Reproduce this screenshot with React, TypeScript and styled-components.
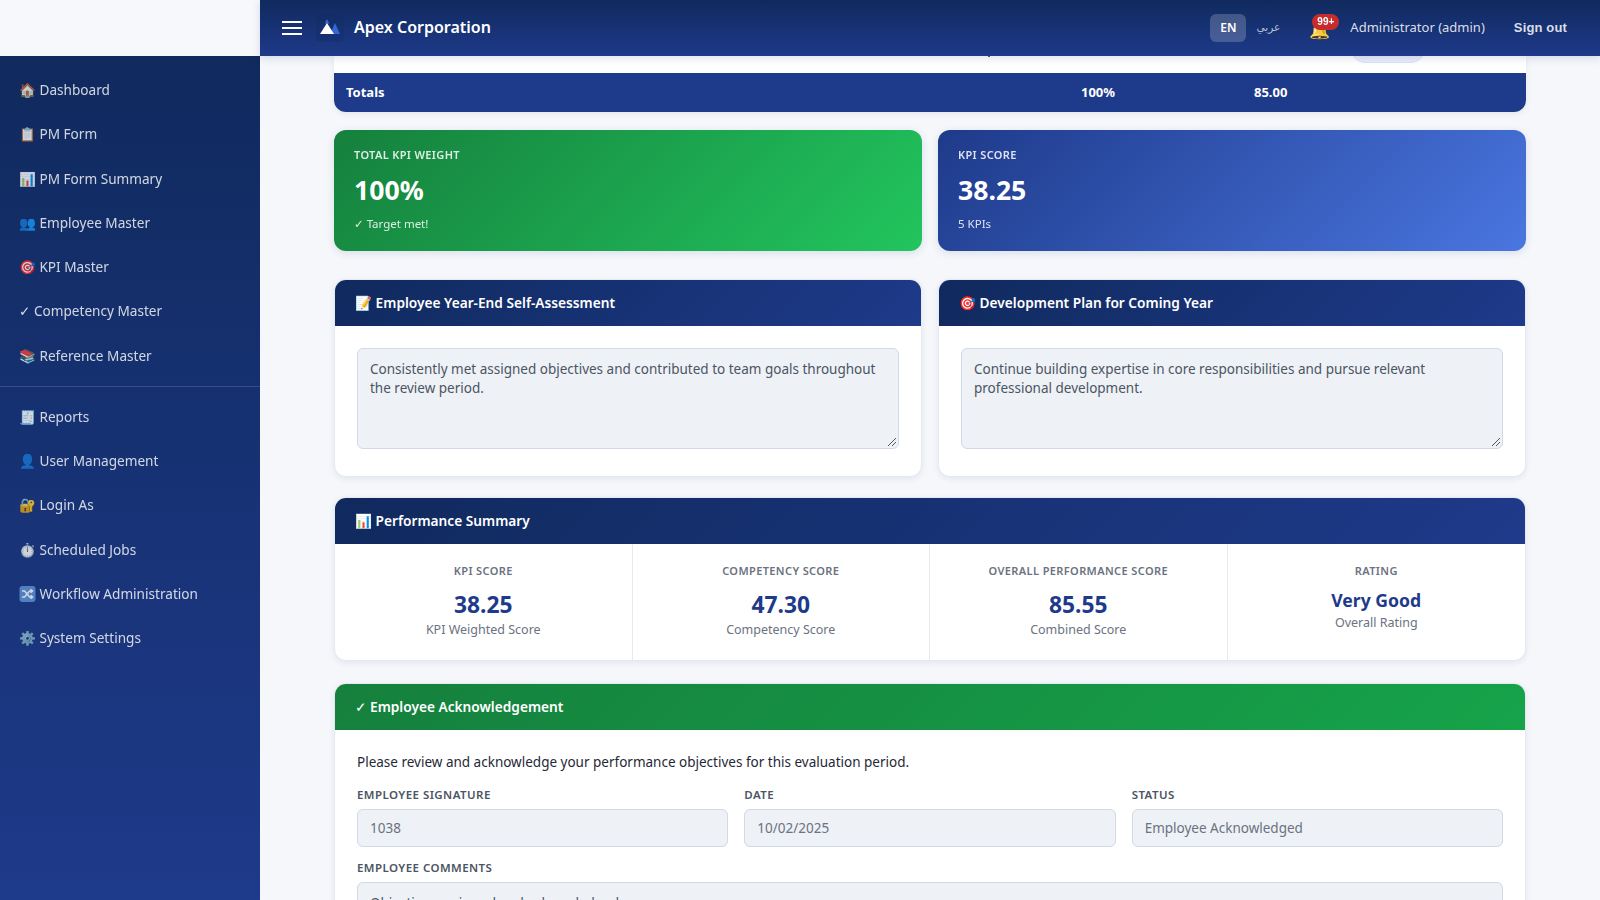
import type { ReactNode } from 'react';
import styled, { createGlobalStyle } from 'styled-components';

const GlobalStyle = createGlobalStyle`
  * { box-sizing: border-box; }
  html, body { margin: 0; height: 100%; overflow: hidden; }
  body {
    font-family: "Noto Sans", "DejaVu Sans", "Noto Color Emoji", sans-serif;
    background: #f5f7fb;
    color: #1f2937;
  }
`;

const Shell = styled.div`
  display: grid;
  grid-template-columns: 260px 1fr;
  grid-template-rows: 56px 1fr;
  height: 100vh;
  overflow: hidden;
`;

const BrandGap = styled.div`
  background: #f7f8fc;
`;

const TopBar = styled.header`
  display: flex;
  align-items: center;
  padding: 0 33px 0 22px;
  background: linear-gradient(180deg, #102a5e 0%, #1e3a8a 100%);
  box-shadow: 0 2px 8px rgba(15, 42, 92, 0.15);
  color: #fff;
  position: relative;
  z-index: 2;
`;

const Burger = styled.button`
  display: flex;
  flex-direction: column;
  justify-content: space-between;
  width: 20px;
  height: 14px;
  padding: 0;
  border: 0;
  background: none;
  span {
    display: block;
    height: 2px;
    background: #fff;
  }
`;

const LogoTile = styled.div`
  display: flex;
  width: 28px;
  height: 28px;
  margin-left: 14px;
  border-radius: 6px;
  background: rgba(15, 42, 92, 0.28);
`;

const Company = styled.div`
  margin-left: 10px;
  padding-bottom: 2px;
  font-size: 16px;
  font-weight: 600;
`;

const TopRight = styled.div`
  display: flex;
  align-items: center;
  margin-left: auto;
`;

const LangButton = styled.div<{ $active?: boolean }>`
  display: flex;
  align-items: center;
  justify-content: center;
  width: 36px;
  height: 28px;
  padding-bottom: 2px;
  border-radius: 6px;
  font-size: ${(p) => (p.$active ? '12px' : '10.5px')};
  font-weight: ${(p) => (p.$active ? 600 : 400)};
  margin-left: ${(p) => (p.$active ? '0' : '4px')};
  background: ${(p) => (p.$active ? 'rgba(255,255,255,0.2)' : 'transparent')};
  color: ${(p) => (p.$active ? '#fff' : 'rgba(255,255,255,0.7)')};
`;

const BellWrap = styled.div`
  position: relative;
  width: 28px;
  height: 28px;
  margin-left: 23px;
  font-size: 17px;
  line-height: 32px;
  filter: saturate(0.85);
`;

const Badge = styled.span`
  position: absolute;
  top: 0;
  left: 3px;
  height: 16px;
  padding: 0 5px;
  border-radius: 8px;
  background: #dc2626;
  color: #fff;
  font: 700 10px/16px "Liberation Sans", sans-serif;
`;

const UserName = styled.div`
  margin-left: 13px;
  padding-bottom: 2px;
  font-size: 13px;
  color: rgba(255, 255, 255, 0.85);
`;

const SignOut = styled.div`
  margin-left: 29px;
  padding-bottom: 1px;
  font: 700 13px "Liberation Sans", sans-serif;
  letter-spacing: 0.15px;
  color: rgba(255, 255, 255, 0.85);
`;

const Sidebar = styled.nav`
  background: linear-gradient(180deg, #102a5e 0%, #1e3a8a 100%);
  padding-top: 12px;
`;

const NavItem = styled.div`
  padding: 12px 19px;
  font-size: 13.6px;
  line-height: 20.25px;
  color: #fff;
  opacity: 0.8;
  white-space: nowrap;
`;

const NavDivider = styled.div`
  height: 1px;
  margin: 8px 0;
  background: rgba(255, 255, 255, 0.15);
`;

const NavGlyph = styled.svg`
  vertical-align: -3px;
`;

const Main = styled.main`
  overflow: hidden;
  padding: 0 74px;
`;

const TableCard = styled.section`
  background: #fff;
  border-radius: 0 0 12px 12px;
  box-shadow: 0 2px 6px rgba(15, 42, 92, 0.08);
`;

const ClippedRow = styled.div`
  position: relative;
  display: flex;
  justify-content: flex-end;
  align-items: flex-end;
  height: 17px;
  padding-right: 101px;
  overflow: hidden;
`;

const CutDescender = styled.span`
  position: absolute;
  left: 654px;
  top: 0;
  width: 2px;
  height: 1px;
  background: #555b66;
`;

const Pill = styled.span`
  display: block;
  width: 74px;
  height: 28px;
  margin-bottom: 10px;
  border-radius: 14px;
  background: #e9eefb;
  border: 1px solid #dbe4f8;
`;

const TotalsRow = styled.div`
  display: grid;
  grid-template-columns: 735px 173px 1fr;
  align-items: center;
  height: 39px;
  padding: 0 0 2px 12px;
  background: #1e3a8a;
  border-radius: 0 0 12px 12px;
  color: #fff;
  font-size: 13px;
  font-weight: 700;
`;

const StatGrid = styled.div`
  display: grid;
  grid-template-columns: 1fr 1fr;
  gap: 16px;
  margin-top: 18px;
`;

const StatCard = styled.div<{ $tone: 'green' | 'blue' }>`
  height: 121px;
  padding: 17px 20px;
  border-radius: 12px;
  color: #fff;
  background: ${(p) =>
    p.$tone === 'green'
      ? 'linear-gradient(135deg, #15803d, #22c55e)'
      : 'linear-gradient(135deg, #1e3a8a, #4a76e0)'};
  box-shadow: 0 2px 8px rgba(15, 42, 92, 0.12);
`;

const StatLabel = styled.div`
  font-size: 11px;
  font-weight: 600;
  line-height: 15px;
  letter-spacing: 0.36px;
  opacity: 0.85;
`;

const StatValue = styled.div`
  margin-top: 9px;
  font-size: 26.6px;
  font-weight: 700;
  line-height: 38px;
`;

const StatNote = styled.div`
  margin-top: 7px;
  font-size: 11.5px;
  line-height: 16px;
  opacity: 0.85;
`;

const PanelGrid = styled.div`
  display: grid;
  grid-template-columns: 1fr 1fr;
  gap: 16px;
  margin-top: 28px;
`;

const Panel = styled.section<{ $gap?: number }>`
  margin-top: ${(p) => p.$gap ?? 0}px;
  background: #fff;
  border: 1px solid #e5e9f2;
  border-radius: 12px;
  overflow: hidden;
  box-shadow: 0 2px 6px rgba(15, 42, 92, 0.08);
`;

const PanelHead = styled.div<{ $green?: boolean }>`
  display: flex;
  align-items: center;
  height: 46px;
  padding: 0 20px 2px;
  color: #fff;
  font-size: 13.7px;
  font-weight: 600;
  white-space: pre;
  background: ${(p) =>
    p.$green
      ? 'linear-gradient(135deg, #15803d, #16a34a)'
      : 'linear-gradient(135deg, #102a5e, #1e3a8a)'};
`;

const PanelBody = styled.div`
  padding: 22px 22px 27px;
`;

const ReadOnlyArea = styled.div`
  height: 101px;
  padding: 10.5px 12px;
  position: relative;
  background: #eef1f6;
  border: 1px solid #d1d8e6;
  border-radius: 6px;
  color: #4b5563;
  font-size: 13.5px;
  line-height: 19.8px;
`;

const Grip = styled.svg`
  position: absolute;
  right: 1px;
  bottom: 1px;
`;

const ScoreRow = styled.div`
  display: grid;
  grid-template-columns: repeat(4, 1fr);
`;

const ScoreCell = styled.div`
  height: 116px;
  padding-top: 19px;
  text-align: center;
  border-right: 1px solid #e5e9f2;
  &:last-child { border-right: 0; }
`;

const ScoreLabel = styled.div`
  font-size: 11px;
  font-weight: 600;
  line-height: 15px;
  letter-spacing: 0.39px;
  color: #6b7280;
`;

const ScoreValue = styled.div<{ $small?: boolean }>`
  margin-top: ${(p) => (p.$small ? '11px' : '12px')};
  color: #1e3a8a;
  font-weight: 700;
  font-size: ${(p) => (p.$small ? '17.6px' : '22.8px')};
  line-height: ${(p) => (p.$small ? '23px' : '29px')};
`;

const ScoreNote = styled.div`
  margin-top: 2px;
  font-size: 12.5px;
  line-height: 17px;
  color: #6b7280;
`;

const Intro = styled.p`
  margin: 0 0 15px;
  font-size: 13.5px;
  line-height: 20px;
  color: #1f2937;
`;

const FieldRow = styled.div`
  display: grid;
  grid-template-columns: repeat(3, 1fr);
  gap: 16px;
`;

const FieldLabel = styled.div`
  margin-bottom: 7px;
  font-size: 11.5px;
  font-weight: 600;
  line-height: 15px;
  letter-spacing: 0.44px;
  color: #4b5563;
`;

const Input = styled.div`
  display: flex;
  align-items: center;
  height: 38px;
  padding: 0 12px;
  background: #eef1f6;
  border: 1px solid #d1d8e6;
  border-radius: 6px;
  color: #6b7280;
  font-size: 13.5px;
`;

const CommentBlock = styled.div`
  margin-top: 13px;
`;

function ShuffleGlyph() {
  return (
    <NavGlyph width="17" height="16" viewBox="0 0 17 16">
      <rect x="0.5" y="0" width="16" height="16" rx="3" fill="#5f93cf" />
      <path
        d="M3 5h2.6l5 6H13M3 11h2.6l5-6H13M11.6 3.2 13.6 5l-2 1.8M11.6 9.2l2 1.8-2 1.8"
        stroke="#fff"
        strokeWidth="1.5"
        fill="none"
      />
    </NavGlyph>
  );
}

const navTop: ReactNode[] = [
  '🏠 Dashboard',
  '📋 PM Form',
  '📊 PM Form Summary',
  '👥 Employee Master',
  '🎯 KPI Master',
  '✓ Competency Master',
  '📚 Reference Master',
];

const navBottom: ReactNode[] = [
  '🧾 Reports',
  '👤 User Management',
  '🔐 Login As',
  '⏱️ Scheduled Jobs',
  <>
    <ShuffleGlyph /> Workflow Administration
  </>,
  '⚙️ System Settings',
];

const scores = [
  { label: 'KPI SCORE', value: '38.25', note: 'KPI Weighted Score' },
  { label: 'COMPETENCY SCORE', value: '47.30', note: 'Competency Score' },
  { label: 'OVERALL PERFORMANCE SCORE', value: '85.55', note: 'Combined Score' },
  { label: 'RATING', value: 'Very Good', note: 'Overall Rating', small: true },
];

const fields = [
  { label: 'EMPLOYEE SIGNATURE', value: '1038' },
  { label: 'DATE', value: '10/02/2025' },
  { label: 'STATUS', value: 'Employee Acknowledged' },
];

function ReviewArea({ text }: { text: string }) {
  return (
    <ReadOnlyArea>
      {text}
      <Grip width="11" height="11" viewBox="0 0 11 11">
        <path d="M10 2 2 10M10 6 6 10" stroke="#555" strokeWidth="1" fill="none" />
      </Grip>
    </ReadOnlyArea>
  );
}

export default function App() {
  return (
    <>
      <GlobalStyle />
      <Shell>
        <BrandGap />
        <TopBar>
          <Burger>
            <span />
            <span />
            <span />
          </Burger>
          <LogoTile>
            <svg width="28" height="28" viewBox="0 0 28 28">
              <path d="M11 5 13.4 9.5H8.6Z" fill="#3565d6" />
              <path d="M19 9 24 20H14Z" fill="#3565d6" />
              <path d="M11 9 18 20H4Z" fill="#fff" />
            </svg>
          </LogoTile>
          <Company>Apex Corporation</Company>
          <TopRight>
            <LangButton $active>EN</LangButton>
            <LangButton>عربي</LangButton>
            <BellWrap>
              🔔
              <Badge>99+</Badge>
            </BellWrap>
            <UserName>Administrator (admin)</UserName>
            <SignOut>Sign out</SignOut>
          </TopRight>
        </TopBar>
        <Sidebar>
          {navTop.map((item, i) => (
            <NavItem key={i}>{item}</NavItem>
          ))}
          <NavDivider />
          {navBottom.map((item, i) => (
            <NavItem key={i}>{item}</NavItem>
          ))}
        </Sidebar>
        <Main>
          <TableCard>
            <ClippedRow>
              <CutDescender />
              <Pill />
            </ClippedRow>
            <TotalsRow>
              <span>Totals</span>
              <span>100%</span>
              <span>85.00</span>
            </TotalsRow>
          </TableCard>
          <StatGrid>
            <StatCard $tone="green">
              <StatLabel>TOTAL KPI WEIGHT</StatLabel>
              <StatValue>100%</StatValue>
              <StatNote>✓ Target met!</StatNote>
            </StatCard>
            <StatCard $tone="blue">
              <StatLabel>KPI SCORE</StatLabel>
              <StatValue>38.25</StatValue>
              <StatNote>5 KPIs</StatNote>
            </StatCard>
          </StatGrid>
          <PanelGrid>
            <Panel>
              <PanelHead>📝 Employee Year-End Self-Assessment</PanelHead>
              <PanelBody>
                <ReviewArea text="Consistently met assigned objectives and contributed to team goals throughout the review period." />
              </PanelBody>
            </Panel>
            <Panel>
              <PanelHead>🎯 Development Plan for Coming Year</PanelHead>
              <PanelBody>
                <ReviewArea text="Continue building expertise in core responsibilities and pursue relevant professional development." />
              </PanelBody>
            </Panel>
          </PanelGrid>
          <Panel $gap={20}>
            <PanelHead>📊 Performance Summary</PanelHead>
            <ScoreRow>
              {scores.map((s) => (
                <ScoreCell key={s.label}>
                  <ScoreLabel>{s.label}</ScoreLabel>
                  <ScoreValue $small={s.small}>{s.value}</ScoreValue>
                  <ScoreNote>{s.note}</ScoreNote>
                </ScoreCell>
              ))}
            </ScoreRow>
          </Panel>
          <Panel $gap={22}>
            <PanelHead $green>✓ Employee Acknowledgement</PanelHead>
            <PanelBody>
              <Intro>Please review and acknowledge your performance objectives for this evaluation period.</Intro>
              <FieldRow>
                {fields.map((f) => (
                  <div key={f.label}>
                    <FieldLabel>{f.label}</FieldLabel>
                    <Input>{f.value}</Input>
                  </div>
                ))}
              </FieldRow>
              <CommentBlock>
                <FieldLabel>EMPLOYEE COMMENTS</FieldLabel>
                <ReadOnlyArea>Objectives reviewed and acknowledged.</ReadOnlyArea>
              </CommentBlock>
            </PanelBody>
          </Panel>
        </Main>
      </Shell>
    </>
  );
}
